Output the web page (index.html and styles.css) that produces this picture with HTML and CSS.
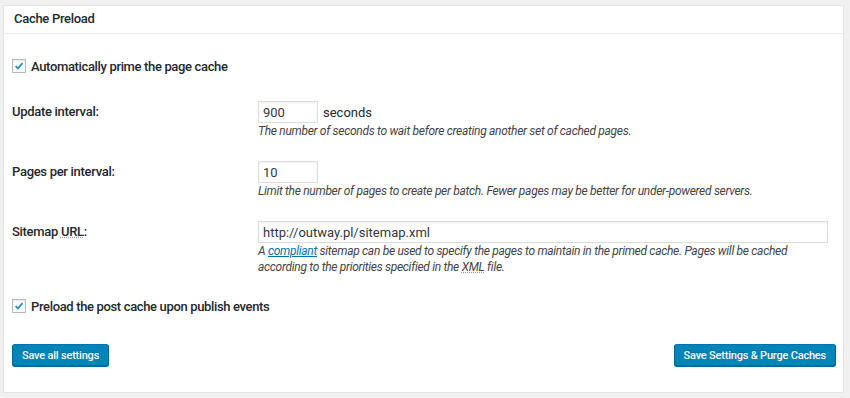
FILE: index.html
```html
<!DOCTYPE html>
<html lang="en">
<head>
  <meta charset="UTF-8" />
  <title>Cache Preload</title>
  <link rel="stylesheet" href="styles.css">
</head>
<body>

<div class="postbox">
  <h2 class="hndle">Cache Preload</h2>

  <div class="inside">

    <label class="check-row first">
      <span class="checkbox">
        <svg viewBox="0 0 14 14" width="14" height="14"><path d="M3 7.2 L5.8 10 L11 3.6" fill="none" stroke="#1e8cbe" stroke-width="2"/></svg>
      </span>
      Automatically prime the page cache
    </label>

    <div class="form-row">
      <div class="row-label">Update interval:</div>
      <div class="row-field">
        <div class="inline">
          <input class="small-text" type="text" value="900"> <span>seconds</span>
        </div>
        <p class="description">The number of seconds to wait before creating another set of cached pages.</p>
      </div>
    </div>

    <div class="form-row">
      <div class="row-label">Pages per interval:</div>
      <div class="row-field">
        <div class="inline">
          <input class="small-text" type="text" value="10">
        </div>
        <p class="description">Limit the number of pages to create per batch. Fewer pages may be better for under-powered servers.</p>
      </div>
    </div>

    <div class="form-row">
      <div class="row-label">Sitemap <abbr title="Uniform Resource Locator">URL</abbr>:</div>
      <div class="row-field">
        <div class="inline">
          <input class="large-text" type="text" value="http://outway.pl/sitemap.xml">
        </div>
        <p class="description">A <a href="#">compliant</a> sitemap can be used to specify the pages to maintain in the primed cache. Pages will be cached according to the priorities specified in the <abbr title="Extensible Markup Language">XML</abbr> file.</p>
      </div>
    </div>

    <label class="check-row second">
      <span class="checkbox">
        <svg viewBox="0 0 14 14" width="14" height="14"><path d="M3 7.2 L5.8 10 L11 3.6" fill="none" stroke="#1e8cbe" stroke-width="2"/></svg>
      </span>
      Preload the post cache upon publish events
    </label>

    <div class="actions">
      <button class="button-primary">Save all settings</button>
      <button class="button-primary">Save Settings &amp; Purge Caches</button>
    </div>

  </div>
</div>

</body>
</html>
```

FILE: styles.css
```css
* {
  box-sizing: border-box;
}

body {
  margin: 0;
  padding: 5px 6px 0 3px;
  background: #f1f1f1;
  color: #23282d;
  font-family: Roboto, 'Liberation Sans', Arial, sans-serif;
  font-size: 13px;
}

.postbox {
  background: #fff;
  border: 1px solid #e5e5e5;
  box-shadow: 0 1px 1px rgba(0,0,0,0.04);
}

.hndle {
  margin: 0;
  height: 28px;
  padding: 0 10px;
  font-size: 13px;
  font-weight: 500;
  letter-spacing: -0.3px;
  line-height: 26px;
  border-bottom: 1px solid #eee;
}

.inside {
  padding: 0 7px 26px 8px;
}

.check-row {
  display: flex;
  align-items: center;
  height: 18px;
  font-weight: 500;
  letter-spacing: -0.35px;
}

.check-row.first {
  margin-top: 23px;
}

.check-row.second {
  margin-top: 22px;
}

.checkbox {
  display: inline-flex;
  width: 14px;
  height: 14px;
  margin-right: 5px;
  border: 1px solid #b4b9be;
  box-shadow: inset 0 1px 2px rgba(0,0,0,0.1);
  background: #fff;
  align-items: center;
  justify-content: center;
}

.checkbox svg {
  width: 12px;
  height: 12px;
}

.form-row {
  display: grid;
  grid-template-columns: 246px 1fr;
  margin-top: 22px;
}

.check-row.first + .form-row {
  margin-top: 26px;
}

.row-label {
  font-weight: 500;
  letter-spacing: -0.3px;
  line-height: 22px;
}

.inline {
  display: flex;
  align-items: center;
  gap: 5px;
  height: 22px;
}

input {
  height: 22px;
  padding: 0 4px;
  border: 1px solid #ddd;
  box-shadow: inset 0 1px 2px rgba(0,0,0,0.07);
  font-family: inherit;
  font-size: 13px;
  color: #32373c;
}

.small-text {
  width: 60px;
}

.large-text {
  width: 570px;
}

.description {
  margin: 0;
  font-style: italic;
  font-size: 12px;
  letter-spacing: -0.3px;
  line-height: 16px;
  color: #444;
}

.description a {
  color: #0073aa;
}

abbr {
  text-decoration: underline dotted #999;
}

.actions {
  display: flex;
  justify-content: space-between;
  margin-top: 29px;
}

.button-primary {
  height: 22px;
  padding: 0 9px;
  background: #0085ba;
  border: 1px solid;
  border-color: #0073aa #006799 #006799;
  border-radius: 3px;
  box-shadow: 0 1px 0 #006799;
  color: #fff;
  text-shadow: 0 -1px 1px #006799;
  font-family: inherit;
  font-size: 11px;
  font-weight: 500;
  letter-spacing: -0.2px;
  cursor: pointer;
}
```
